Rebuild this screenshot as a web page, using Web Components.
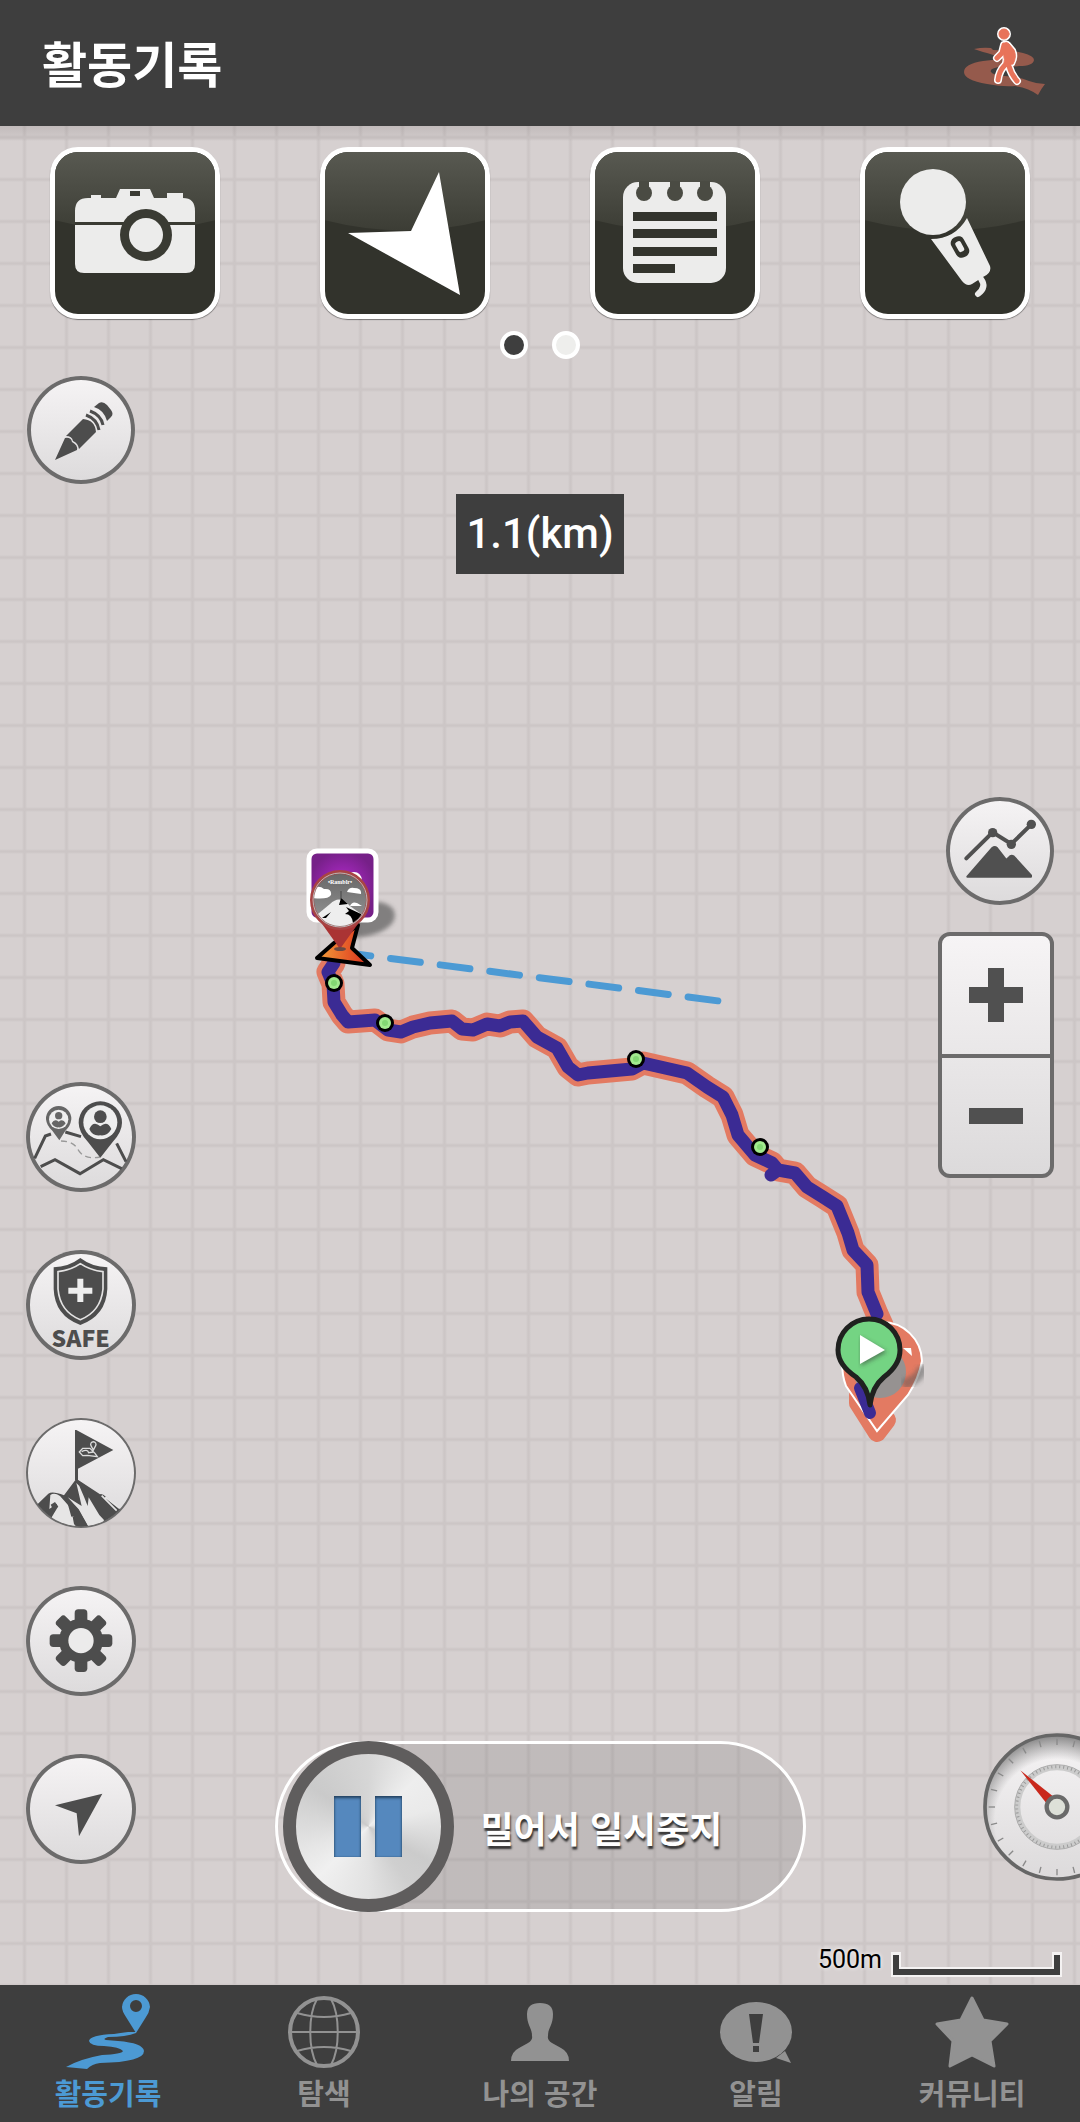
<!DOCTYPE html>
<html lang="ko">
<head>
<meta charset="utf-8">
<meta name="viewport" content="width=device-width, initial-scale=1">
<title>활동기록</title>
<style>
  :root {
    --c-bar: #3e3e3e;
    --c-accent: #4c9ad4;
    --c-muted: #929292;
    --c-icon: #4d4d4d;
    --c-ring: #6c6b6b;
    --font-kr: "Noto Sans CJK KR", sans-serif;
    --font-num: Roboto, "Noto Sans", sans-serif;
  }

  body {
    margin: 0;
    font-family: var(--font-kr);
  }
</style>
</head>
<body>

<tracking-app>
  <app-header slot="header" heading="활동기록">
    <svg width="84" height="70" viewBox="0 0 84 70" aria-hidden="true">
      <path fill="#955a4c" d="M11 22Q20 20 28 21L30 23Q48 23 60 26Q71 29 71 33Q70 39 56 39Q50 40 38 40Q26 41 28 45Q30 48 42 49Q56 50 66 54Q74 57 82 57Q78 62 75 68Q66 61 52 59Q40 60 24 57Q1 53 1 45Q1 37 20 34L38 32Q30 27 20 25Z"/>
      <g fill="#fff" stroke="#fff" stroke-width="4" stroke-linejoin="round" stroke-linecap="round">
        <circle cx="41" cy="7" r="5"/>
        <path d="M41 17Q43 14 46 17L51 23Q54 30 50 37L43 38L41 36Q42 32 41 30Z"/>
        <path fill="none" stroke-width="8" d="M41 18L39 26L34 31M42 38Q36 44 35 53M46 39Q48 47 54 54"/>
      </g>
      <g fill="#e8735a" stroke="#e8735a" stroke-linejoin="round" stroke-linecap="round">
        <circle cx="41" cy="7" r="5"/>
        <path d="M41 17Q43 14 46 17L51 23Q54 30 50 37L43 38L41 36Q42 32 41 30Z"/>
        <path fill="none" stroke-width="5" d="M41 18L39 26L34 31M42 38Q36 44 35 53M46 39Q48 47 54 54"/>
      </g>
    </svg>
  </app-header>

  <route-map slot="map"></route-map>

  <tool-tile slot="tools" label="사진">
    <svg viewBox="0 0 170 172">
      <path fill="#ececeb" d="M25 64Q25 51 38 51H41V48H51V51H66L70 42H100L104 51H117V46H133V51Q145 51 145 64V117Q145 126 136 126H34Q25 126 25 117Z"/>
      <g fill="#3a3b33"><rect x="80" y="44" width="10" height="5"/><rect x="25" y="75" width="120" height="3"/><circle cx="96" cy="88" r="26"/></g>
      <circle cx="96" cy="88" r="17" fill="#ececeb"/>
    </svg>
  </tool-tile>
  <tool-tile slot="tools" label="방향">
    <svg viewBox="0 0 170 172"><path fill="#fff" d="M119 25L140 148L28 86L91 84Z"/></svg>
  </tool-tile>
  <tool-tile slot="tools" label="메모">
    <svg viewBox="0 0 170 172">
      <rect x="33" y="35" width="103" height="101" rx="15" fill="#ececeb"/>
      <g fill="#4a4b43"><circle cx="54" cy="46" r="8"/><circle cx="85" cy="46" r="8"/><circle cx="115" cy="46" r="8"/>
        <path d="M49 34h10v8H49zM80 34h10v8H80zM110 34h10v8h-10z"/></g>
      <path fill="#33342d" d="M43 65h84v9H43zM43 82h84v9H43zM43 100h84v9H43zM43 117h42v9H43z"/>
    </svg>
  </tool-tile>
  <tool-tile slot="tools" label="음성">
    <svg viewBox="0 0 170 172">
      <circle cx="73" cy="55" r="33" fill="#ececeb"/>
      <path fill="#ececeb" d="M107 71L130 119Q132 126 123 130L112 137Q107 140 102 134L71 92Q95 92 107 71Z"/>
      <path fill="none" stroke="#ececeb" stroke-width="6" stroke-linecap="round" d="M121 132Q127 140 118 147"/>
      <g transform="rotate(-29 100 100)"><rect x="93" y="89" width="14" height="22" rx="6" fill="#33342d"/><rect x="97" y="94" width="6" height="11" rx="2" fill="#ececeb"/></g>
    </svg>
  </tool-tile>

  <round-button slot="edit" label="그리기" class="small">
    <svg viewBox="0 0 108 108" fill="#4d4d4d">
      <path d="M28 84L38 62Q44 61 45 66Q51 69 50 74Z"/>
      <path d="M39 60L56 43Q68 44 69 56L52 73Q51 67 46 65Q45 60 39 60Z"/>
      <path fill="none" stroke="#4d4d4d" stroke-width="3" d="M59 39Q70 43 72 54M63 35Q74 39 76 49"/>
      <path d="M67 31L72 27Q76 25 80 29L84 34Q87 38 84 41L80 45Q77 34 67 31Z"/>
    </svg>
  </round-button>

  <round-button slot="rail" label="동행 위치">
    <svg viewBox="78 66 330 330">
      <g fill="none" stroke="#4d4d4d" stroke-width="9">
        <path d="M104 295L136 228L153 222M196 216L243 230M350 250L378 305M122 320L165 299L240 341L310 299L365 326"/>
        <path stroke="#999" stroke-width="4" stroke-dasharray="18 12" d="M183 243Q222 243 236 272Q255 300 300 291"/>
      </g>
      <path fill="#666" d="M176 138A38 38 0 0 1 214 178Q211 200 196 212L178 241L157 212Q140 198 138 178A38 38 0 0 1 176 138Z"/>
      <circle cx="176" cy="178" r="29" fill="#eee"/>
      <circle cx="176" cy="167" r="11" fill="#666"/>
      <path fill="#666" d="M155 190Q163 175 176 185Q189 175 197 190Q187 204 176 202Q162 204 155 190Z"/>
      <path fill="#4d4d4d" d="M301 124A65 64 0 0 1 366 188Q366 216 338 246L301 293L264 246Q236 216 236 188A65 64 0 0 1 301 124Z"/>
      <circle cx="301" cy="187" r="51" fill="#eee"/>
      <circle cx="301" cy="170" r="19" fill="#4d4d4d"/>
      <path fill="#4d4d4d" d="M268 207Q280 180 301 199Q322 180 334 207Q322 229 301 226Q277 229 268 207Z"/>
    </svg>
  </round-button>
  <round-button slot="rail" label="SAFE">
    <svg viewBox="78 573 330 330" fill="#4d4d4d">
      <path d="M241 597Q205 624 161 625V690Q164 770 241 798Q318 770 322 690V625Q277 624 241 597Z"/>
      <path fill="none" stroke="#e4e3e3" stroke-width="5" d="M241 614Q212 634 174 638V690Q180 758 241 782Q302 758 309 690V638Q271 634 241 614Z"/>
      <path fill="#eee" d="M232 659h18v27h27v18h-27v25h-18v-25h-27v-18h27z"/>
      <text x="242" y="865" text-anchor="middle" font-family="Noto Sans CJK KR, sans-serif" font-weight="900" font-size="69">SAFE</text>
    </svg>
  </round-button>
  <round-button slot="rail" label="정상 인증" class="thin">
    <svg viewBox="78 54 330 330" fill="#4d4d4d">
      <clipPath id="peak"><circle cx="243" cy="219" r="160"/></clipPath>
      <path d="M225 90H229L340 150L234 206V240H225Z"/>
      <path fill="none" stroke="#ddd" stroke-width="4" d="M238 156L248 145H270L285 160L292 170L262 166L248 167ZM245 155Q262 146 266 158L280 156M280 150L273 137A8 8 0 1 1 287 137Z"/>
      <g clip-path="url(#peak)">
        <path d="M100 325L145 281Q157 272 192 286L229 236L300 283Q306 280 318 290L385 350L300 395H110Z"/>
        <path fill="#e6e5e5" d="M151 285Q163 276 180 288L210 322L222 352L217 345L222 372L232 384L175 385L155 352L173 322L170 311L148 327Z"/>
        <path fill="#e6e5e5" d="M229 249L238 258L252 290L263 318L266 292L298 345L312 360L300 395L268 385L236 328L203 292L245 318Z"/>
        <path fill="none" stroke="#e6e5e5" stroke-width="5" d="M305 287L350 332M316 291L358 324"/>
        <path d="M152 314L165 306L175 320L160 330Z"/>
        <path d="M196 286L236 330L270 390H240L222 348L214 350Z"/>
      </g>
    </svg>
  </round-button>
  <round-button slot="rail" label="설정">
    <svg viewBox="78 558 330 330">
      <g transform="translate(243 722)" fill="#4d4d4d">
        <g id="teeth"><rect x="-19" y="-94" width="38" height="188" rx="11"/><rect x="-94" y="-19" width="188" height="38" rx="11"/></g>
        <use href="#teeth" transform="rotate(45)"/>
        <circle r="66"/>
        <circle r="38" fill="#ecebeb"/>
      </g>
    </svg>
  </round-button>
  <round-button slot="rail" label="현재 위치">
    <svg viewBox="78 1062 330 330"><path fill="#4d4d4d" d="M307 1181L237 1309L230 1240L165 1216Z"/></svg>
  </round-button>

  <distance-badge slot="distance">1.1(km)</distance-badge>
  <slide-pause slot="pause">밀어서 일시중지</slide-pause>

  <round-button slot="zoom" label="고도" class="small">
    <svg viewBox="135 51 324 324" fill="#505050">
      <path fill="none" stroke="#505050" stroke-width="12" stroke-linecap="round" d="M196 235L275 157L331 192L391 133"/>
      <circle cx="275" cy="158" r="14"/><circle cx="331" cy="193" r="14"/><circle cx="391" cy="133" r="14"/>
      <path stroke="#505050" stroke-width="6" stroke-linejoin="round" d="M199 290L274 204Q281 198 288 204L316 240L327 229Q332 225 338 229L390 286V290Z"/>
    </svg>
  </round-button>
  <zoom-control slot="zoom"></zoom-control>

  <speed-gauge slot="status"></speed-gauge>
  <map-scale slot="status">500m</map-scale>

  <nav-tab slot="nav" label="활동기록" active>
    <svg width="84" height="76" viewBox="0 0 84 76" fill="currentColor">
      <path fill-rule="evenodd" d="M70 0A14 14 0 0 1 84 13Q83 19 80 23L70 39L60 23Q56 17 56 13A14 14 0 0 1 70 0ZM70 6a6 6 0 1 0 0 12a6 6 0 1 0 0-12Z"/>
      <path d="M70 38H62Q54 39 48 40Q24 41 23 47Q24 52 38 52Q54 53 57 57Q56 60 36 61Q14 65 0 73L21 75Q26 70 34 69Q78 68 78 57Q77 49 52 47L40 46Q36 45 42 43Q60 43 70 39Z"/>
    </svg>
  </nav-tab>
  <nav-tab slot="nav" label="탐색">
    <svg width="72" height="74" viewBox="0 0 72 74" fill="none" stroke="currentColor" stroke-width="2">
      <circle cx="36" cy="37" r="34" stroke-width="4"/>
      <path d="M3 37H69M9 18Q36 26 63 18M9 56Q36 48 63 56M29 4C20 20 20 54 29 70M43 4C52 20 52 54 43 70"/>
    </svg>
  </nav-tab>
  <nav-tab slot="nav" label="나의 공간">
    <svg width="58" height="58" viewBox="0 0 58 58" fill="currentColor"><path d="M29 0Q42 0 42 11C42 23 37 24 37 33Q36 37 41 40L50 45Q58 49 58 58H0Q0 49 8 45L17 40Q22 37 21 33C21 24 16 23 16 11Q16 0 29 0Z"/></svg>
  </nav-tab>
  <nav-tab slot="nav" label="알림">
    <svg width="72" height="61" viewBox="0 0 72 61" fill="currentColor">
      <ellipse cx="36" cy="30" rx="36" ry="30"/>
      <path d="M65 49L71 61L56 56Z"/>
      <path fill="#3e3e3e" d="M29 12H43L39 41H33ZM33 44h6v6h-6z"/>
    </svg>
  </nav-tab>
  <nav-tab slot="nav" label="커뮤니티">
    <svg width="74" height="72" viewBox="0 0 74 72" fill="currentColor" stroke="currentColor" stroke-width="3" stroke-linejoin="round"><path d="M37 2L48 24L72 28L55 45L59 70L37 59L15 70L18 45L2 28L26 24Z"/></svg>
  </nav-tab>
</tracking-app>

<script>
class TrackingApp extends HTMLElement {
  constructor() {
    super();
    this.attachShadow({ mode: "open" });
  }

  connectedCallback() {
    this.shadowRoot.innerHTML = `
      <style>
        :host {
          display: flex;
          flex-direction: column;
          min-height: 100vh;
        }

        main {
          position: relative;
          flex: 1;
          display: flex;
          flex-direction: column;
          overflow: hidden;
        }

        .map {
          position: absolute;
          inset: 0;
        }

        .tools, .dots, .panels {
          position: relative;
        }

        .tools {
          display: grid;
          grid-template-columns: repeat(4, 1fr);
          justify-items: center;
          padding-top: 21px;
        }

        .dots {
          display: flex;
          justify-content: center;
          gap: 24px;
          padding: 12px 0 1px;
        }

        .dots i {
          box-sizing: border-box;
          width: 28px;
          height: 28px;
          border: 4px solid #fff;
          border-radius: 50%;
          background: #eeeeec;
        }

        .dots i:first-child {
          background: var(--c-bar);
        }

        .panels {
          flex: 1;
          display: grid;
          grid-template-columns: 1fr auto 1fr;
        }

        .left, .center, .right {
          display: flex;
          flex-direction: column;
          justify-content: space-between;
        }

        .left {
          align-items: center;
          justify-self: start;
          padding: 16px 0 121px 26px;
        }

        .rail {
          display: flex;
          flex-direction: column;
          gap: 58px;
        }

        .center {
          align-items: center;
          padding: 134px 0 73px;
        }

        .right {
          align-items: flex-end;
          padding: 437px 0 7px;
        }

        .zoom {
          display: flex;
          flex-direction: column;
          align-items: flex-end;
          gap: 27px;
          margin-right: 26px;
        }

        .status {
          display: flex;
          flex-direction: column;
          align-items: flex-end;
          gap: 61px;
        }

        nav {
          display: grid;
          grid-template-columns: repeat(5, 1fr);
          background: var(--c-bar);
        }
      </style>
      <slot name="header"></slot>
      <main>
        <div class="map"><slot name="map"></slot></div>
        <div class="tools"><slot name="tools"></slot></div>
        <div class="dots"><i></i><i></i></div>
        <div class="panels">
          <div class="left">
            <slot name="edit"></slot>
            <div class="rail"><slot name="rail"></slot></div>
          </div>
          <div class="center">
            <slot name="distance"></slot>
            <slot name="pause"></slot>
          </div>
          <div class="right">
            <div class="zoom"><slot name="zoom"></slot></div>
            <div class="status"><slot name="status"></slot></div>
          </div>
        </div>
      </main>
      <nav><slot name="nav"></slot></nav>
    `;
  }
}

class AppHeader extends HTMLElement {
  constructor() {
    super();
    this.attachShadow({ mode: "open" });
  }

  connectedCallback() {
    this.shadowRoot.innerHTML = `
      <style>
        :host {
          display: block;
          background: var(--c-bar);
        }

        header {
          display: flex;
          justify-content: space-between;
          align-items: center;
          height: 124px;
          padding: 0 33px 2px 42px;
        }

        h1 {
          margin: 0;
          color: #fff;
          font-size: 49px;
          line-height: 60px;
          font-weight: 700;
        }
      </style>
      <header>
        <h1>${this.getAttribute("heading")}</h1>
        <slot></slot>
      </header>
    `;
  }
}

class ToolTile extends HTMLElement {
  constructor() {
    super();
    this.attachShadow({ mode: "open" });
  }

  connectedCallback() {
    this.shadowRoot.innerHTML = `
      <style>
        :host {
          display: block;
        }

        button {
          position: relative;
          display: block;
          width: 170px;
          height: 172px;
          padding: 0;
          border: 5px solid #fff;
          border-radius: 28px;
          background: #32332c;
          box-shadow: 0 1px 1px rgba(0, 0, 0, 0.45);
          overflow: hidden;
          cursor: pointer;
        }

        .gloss, ::slotted(svg) {
          position: absolute;
          inset: -5px;
          width: 170px;
          height: 172px;
        }
      </style>
      <button type="button" aria-label="${this.getAttribute("label")}">
        <svg class="gloss" viewBox="0 0 170 172">
          <linearGradient id="shine" x2="0" y2="1">
            <stop stop-color="#5a5b53"/>
            <stop offset="1" stop-color="#3c3d35"/>
          </linearGradient>
          <path fill="url(#shine)" d="M0 0H170V72Q85 95 0 72Z"/>
        </svg>
        <slot></slot>
      </button>
    `;
  }
}

class RoundButton extends HTMLElement {
  constructor() {
    super();
    this.attachShadow({ mode: "open" });
  }

  connectedCallback() {
    this.shadowRoot.innerHTML = `
      <style>
        :host {
          --size: 110px;
          --ring: 4px;
          display: block;
        }

        :host(.small) {
          --size: 108px;
        }

        :host(.thin) {
          --ring: 2px;
        }

        button {
          display: grid;
          box-sizing: border-box;
          width: var(--size);
          height: var(--size);
          padding: 0;
          border: 0;
          border-radius: 50%;
          box-shadow: inset 0 0 0 var(--ring) var(--c-ring);
          background: linear-gradient(#f6f4f5, #dcdadb);
          cursor: pointer;
        }

        ::slotted(svg) {
          width: var(--size);
          height: var(--size);
        }
      </style>
      <button type="button" aria-label="${this.getAttribute("label")}"><slot></slot></button>
    `;
  }
}

class ZoomControl extends HTMLElement {
  constructor() {
    super();
    this.attachShadow({ mode: "open" });
  }

  connectedCallback() {
    this.shadowRoot.innerHTML = `
      <style>
        :host {
          box-sizing: border-box;
          display: flex;
          flex-direction: column;
          width: 116px;
          border: 4px solid var(--c-ring);
          border-radius: 12px;
          background: linear-gradient(#f6f4f5, #dcdadb);
        }

        button {
          display: grid;
          place-items: center;
          height: 118px;
          padding: 0;
          border: 0;
          background: none;
          cursor: pointer;
        }

        button + button {
          height: 120px;
          border-top: 4px solid var(--c-ring);
        }
      </style>
      <button type="button" aria-label="확대">
        <svg width="54" height="54" viewBox="0 0 54 54"><path fill="#505050" d="M19 0h16v19h19v16H35v19H19V35H0V19h19z"/></svg>
      </button>
      <button type="button" aria-label="축소">
        <svg width="54" height="16" viewBox="0 0 54 16"><path fill="#505050" d="M0 0h54v16H0z"/></svg>
      </button>
    `;
  }
}

class DistanceBadge extends HTMLElement {
  constructor() {
    super();
    this.attachShadow({ mode: "open" });
  }

  connectedCallback() {
    this.shadowRoot.innerHTML = `
      <style>
        :host {
          display: block;
          padding: 0 10px;
          background: var(--c-bar);
          color: #fff;
          font: 500 42px/80px var(--font-num);
        }
      </style>
      <slot></slot>
    `;
  }
}

class SlidePause extends HTMLElement {
  constructor() {
    super();
    this.attachShadow({ mode: "open" });
  }

  connectedCallback() {
    this.shadowRoot.innerHTML = `
      <style>
        :host {
          box-sizing: border-box;
          display: flex;
          align-items: center;
          gap: 27px;
          width: 531px;
          height: 171px;
          padding-left: 5px;
          border: 3px solid #fff;
          border-radius: 86px;
          background: linear-gradient(90deg, transparent 10%, rgba(0, 0, 0, 0.1) 25%);
        }

        button {
          display: flex;
          justify-content: center;
          align-items: center;
          gap: 14px;
          flex: none;
          width: 171px;
          height: 171px;
          padding: 0;
          border: 13px solid #5f5d5d;
          border-radius: 50%;
          background: conic-gradient(#d6d6d6, #eee 45deg, #eaeaea 75deg, #cbcbcb 120deg, #cfcfcf 145deg, #e2e2e2 180deg, #f0f0f0 225deg, #e6e6e6 250deg, #cacaca 305deg, #d6d6d6) padding-box;
          cursor: pointer;
        }

        i {
          width: 27px;
          height: 61px;
          background: #5588be;
          box-shadow: inset 0 2px 3px #23415f, inset 0 0 2px #38608a;
        }

        span {
          color: #fff;
          font-size: 36px;
          line-height: 48px;
          font-weight: 700;
          text-shadow: 1px 3px 2px #333;
          white-space: nowrap;
        }
      </style>
      <button type="button" aria-label="일시중지"><i></i><i></i></button>
      <span><slot></slot></span>
    `;
  }
}

class SpeedGauge extends HTMLElement {
  constructor() {
    super();
    this.attachShadow({ mode: "open" });
  }

  connectedCallback() {
    let ticks = "";
    for (let a = 0; a < 360; a += 15) {
      ticks += `<path d="M0 -205V-186" transform="rotate(${a})"/>`;
    }

    this.shadowRoot.innerHTML = `
      <style>
        :host {
          display: block;
          margin-right: -51px;
        }

        button {
          display: block;
          padding: 0;
          border: 0;
          border-radius: 50%;
          background: none;
          cursor: pointer;
        }

        svg {
          display: block;
        }
      </style>
      <button type="button" aria-label="속도">
        <svg width="148" height="148" viewBox="-222 -222 444 444">
          <linearGradient id="face" x2="0" y2="1">
            <stop stop-color="#f6f4f5"/>
            <stop offset="1" stop-color="#dcdadb"/>
          </linearGradient>
          <radialGradient id="shade" cy="0.6" r="0.6">
            <stop offset="0.72" stop-color="#666" stop-opacity="0"/>
            <stop offset="1" stop-color="#555" stop-opacity="0.7"/>
          </radialGradient>
          <circle r="216" fill="url(#face)"/>
          <circle r="216" fill="url(#shade)" stroke="#666" stroke-width="11"/>
          <g stroke="#8a8a8a" stroke-width="4">${ticks}</g>
          <circle r="118" fill="none" stroke="#ccc" stroke-width="16"/>
          <circle r="121" fill="none" stroke="#999" stroke-width="9" stroke-dasharray="3 9"/>
          <circle r="127" fill="none" stroke="#aaa" stroke-width="3"/>
          <path fill="#c9281c" d="M-110 -110L-14 -34L-34 -14Z"/>
          <circle r="31" fill="#dde0d8" stroke="#6a6a6a" stroke-width="13"/>
        </svg>
      </button>
    `;
  }
}

class MapScale extends HTMLElement {
  constructor() {
    super();
    this.attachShadow({ mode: "open" });
  }

  connectedCallback() {
    this.shadowRoot.innerHTML = `
      <style>
        :host {
          display: flex;
          align-items: flex-end;
          gap: 9px;
          margin-right: 16px;
          color: #000;
          font: 400 25px/36px var(--font-num);
          text-shadow: 0 0 4px #fff;
        }

        svg {
          display: block;
        }
      </style>
      <slot></slot>
      <svg width="173" height="26" viewBox="0 0 173 26" fill="none">
        <path stroke="#f4f2f2" stroke-width="10" d="M5 0V20H166V0"/>
        <path stroke="#3e3e3e" stroke-width="6" d="M5 3V20H166V3"/>
      </svg>
    `;
  }
}

class NavTab extends HTMLElement {
  constructor() {
    super();
    this.attachShadow({ mode: "open" });
  }

  connectedCallback() {
    this.shadowRoot.innerHTML = `
      <style>
        :host {
          display: block;
          color: var(--c-muted);
        }

        :host([active]) {
          color: var(--c-accent);
        }

        a {
          display: flex;
          flex-direction: column;
          align-items: center;
          gap: 6px;
          padding: 9px 0 14px;
          color: inherit;
          text-decoration: none;
          font-size: 29px;
          line-height: 32px;
          font-weight: 700;
        }

        .icon {
          display: grid;
          place-items: center;
          height: 76px;
        }
      </style>
      <a href="#">
        <div class="icon"><slot></slot></div>
        <span>${this.getAttribute("label")}</span>
      </a>
    `;
  }
}

class RouteMap extends HTMLElement {
  constructor() {
    super();
    this.attachShadow({ mode: "open" });
  }

  connectedCallback() {
    const track = "M334 963L328 972L333 984L334 1002L342 1015L348 1022L362 1021L375 1020L388 1030L401 1032L413 1027L430 1023L452 1021L462 1029L473 1030L487 1024L500 1026L510 1022L523 1021L537 1037L557 1048L568 1067L578 1075L588 1073L610 1071L632 1069L643 1063L665 1068L687 1073L707 1087L723 1097L732 1115L738 1135L755 1155L772 1163L778 1170L795 1173L807 1187L823 1197L837 1206L848 1233L853 1250L867 1265L868 1292L877 1314";
    const points = [[334, 983], [385, 1023], [636, 1059], [760, 1147]];
    const dots = points.map(([x, y]) => `
      <circle cx="${x}" cy="${y}" r="9"/>
      <circle cx="${x}" cy="${y}" r="6" fill="#a2ea8e"/>
      <circle cx="${x}" cy="${y}" r="3" fill="#83d873"/>`).join("");

    this.shadowRoot.innerHTML = `
      <style>
        :host {
          display: block;
          height: 100%;
          background:
            linear-gradient(rgba(90, 80, 80, 0.16), rgba(90, 80, 80, 0.04) 14px, transparent 15px),
            linear-gradient(transparent, #ccc6c6 2px, #ccc6c6 3px, transparent 5px) 0 9px / 42px 42px,
            linear-gradient(90deg, transparent, #ccc6c6 2px, #ccc6c6 3px, transparent 5px) 22px 0 / 42px 42px,
            #d6d0d0;
        }

        svg {
          display: block;
          width: 100%;
          height: 100%;
        }
      </style>
      <svg viewBox="0 126 1080 1859" preserveAspectRatio="xMidYMid slice" role="img" aria-label="이동 경로">
        <defs>
          <radialGradient id="purple"><stop stop-color="#b52bd0"/><stop offset="1" stop-color="#762088"/></radialGradient>
          <linearGradient id="fire"><stop stop-color="#f2a03a"/><stop offset="1" stop-color="#dc2a1c"/></linearGradient>
          <linearGradient id="sky" x2="0" y2="1"><stop stop-color="#666"/><stop offset="1" stop-color="#999"/></linearGradient>
          <clipPath id="medal"><circle cx="340" cy="900" r="26"/></clipPath>
          <filter id="soft"><feGaussianBlur stdDeviation="2"/></filter>
        </defs>

        <g fill="none" stroke-linejoin="round" stroke-linecap="round">
          <path stroke="#e37a62" stroke-width="23" d="${track}L882 1325"/>
          <path stroke="#e37a62" stroke-width="18" d="M858 1395V1403L877 1433L887 1420"/>
          <path stroke="#3b2b94" stroke-width="13" d="${track}M778 1170L771 1175"/>
          <path stroke="#4c9ad4" stroke-width="7" stroke-dasharray="30 20" d="M341 952L719 1001"/>
        </g>
        ${dots}

        <path fill="#e37a62" stroke="#fff" stroke-width="2" d="M882 1322A40 40 0 0 1 922 1361Q919 1378 908 1395L877 1431L846 1386Q842 1376 842 1361A40 40 0 0 1 882 1322Z"/>
        <path fill="#fff" d="M903 1348H911L912 1356Z"/>
        <circle cx="880" cy="1372" r="26" fill="#969291"/>
        <path d="M903 1385Q925 1376 921 1366" fill="none" stroke="#555" stroke-width="10" stroke-opacity="0.5" filter="url(#soft)"/>
        <path fill="none" stroke="#3b2b94" stroke-width="12" stroke-linecap="round" d="M860 1388L870 1413"/>
        <path fill="#74d483" stroke="#1f211f" stroke-width="5" stroke-linejoin="round" d="M869 1319A31 31 0 0 1 900 1350Q900 1365 884 1377Q872 1387 870 1405Q868 1387 856 1377Q838 1365 838 1350A31 31 0 0 1 869 1319Z"/>
        <path fill="#333" opacity="0.5" filter="url(#soft)" d="M861 1337L887 1352L861 1366Z"/>
        <path fill="#fff" d="M860 1335L885 1350L860 1364Z"/>

        <path fill="#555" opacity="0.65" filter="url(#soft)" d="M350 940Q350 905 380 902Q398 906 394 920Q388 934 354 938Z"/>
        <rect x="309" y="851" width="67" height="69" rx="8" fill="url(#purple)" stroke="#fff" stroke-width="5"/>
        <path fill="#fff" d="M346 874Q360 868 362 880Z"/>
        <path fill="url(#fire)" stroke="#000" stroke-width="4" stroke-linejoin="round" d="M317 958L334 943L358 925L352 948L370 965Z"/>
        <path fill="#aa3434" d="M315 914L340 949L365 914Z"/>
        <ellipse cx="340" cy="949" rx="6" ry="2" fill="#6a4a44"/>
        <circle cx="340" cy="900" r="28" fill="url(#sky)" stroke="#a84444" stroke-width="4"/>
        <circle cx="340" cy="900" r="27" fill="none" stroke="#b8b8b8"/>
        <g clip-path="url(#medal)">
          <path fill="#fff" d="M312 890Q318 884 324 889Q332 888 331 895Q328 900 312 898ZM347 892Q349 887 354 888Q362 888 361 894ZM350 906Q352 901 357 903L362 906Z"/>
          <path fill="#eee" d="M312 919L330 904Q340 894 350 906L368 919V932H312Z"/>
          <path d="M341 898L348 904L339 905ZM346 907L361 914L362 923H353Q352 914 345 914L349 911ZM322 918L331 912L326 918Z"/>
          <path stroke="#444" d="M341 891V899"/>
        </g>
        <text x="340" y="884" text-anchor="middle" font-family="Liberation Serif, serif" font-weight="700" font-size="6" fill="#fff">•Ramblr•</text>
      </svg>
    `;
  }
}

customElements.define("tracking-app", TrackingApp);
customElements.define("app-header", AppHeader);
customElements.define("tool-tile", ToolTile);
customElements.define("round-button", RoundButton);
customElements.define("zoom-control", ZoomControl);
customElements.define("distance-badge", DistanceBadge);
customElements.define("slide-pause", SlidePause);
customElements.define("speed-gauge", SpeedGauge);
customElements.define("map-scale", MapScale);
customElements.define("nav-tab", NavTab);
customElements.define("route-map", RouteMap);
</script>
</body>
</html>
